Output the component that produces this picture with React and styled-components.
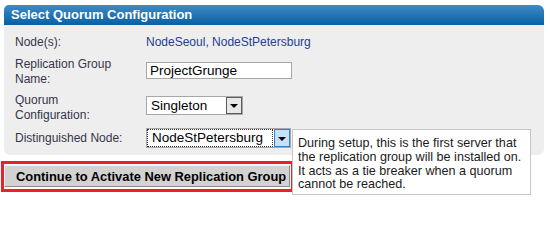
import styled, {createGlobalStyle} from 'styled-components';

const GlobalStyle = createGlobalStyle`
    html, body {
        margin: 0;
        padding: 0;
        background: #ffffff;
    }

    body {
        font-family: "Liberation Sans", Arial, sans-serif;
        font-size: 12px;
    }
`;

const Page = styled.div`
    position: relative;
    width: 550px;
    height: 209px;
    padding-top: 5px;
    box-sizing: border-box;
`;

const Panel = styled.section`
    margin: 0 6px 0 4px;
    background: #eeeeee;
    border-radius: 5px 6px 6px 6px;
    overflow: hidden;
`;

const PanelHeader = styled.h2`
    margin: 0;
    height: 20px;
    padding: 0 7px;
    line-height: 20px;
    font-size: 13px;
    font-weight: bold;
    color: #ffffff;
    background: linear-gradient(#3e8cc7, #0a5ea3);
`;

const FormGrid = styled.div`
    display: grid;
    grid-template-columns: 131px 1fr;
    grid-template-rows: 15px 30px 30px 20px;
    row-gap: 6px;
    padding: 10px 11px 7px;
`;

const Label = styled.div`
    align-self: ${({$align}) => $align || 'start'};
    margin-top: ${({$offset}) => $offset || 0}px;
    line-height: 14.5px;
    color: #353548;
`;

const Value = styled.div`
    line-height: 15px;
    color: #22408f;
`;

const Field = styled.div`
    align-self: ${({$align}) => $align || 'start'};
    margin-top: ${({$offset}) => $offset || 0}px;
`;

const TextInput = styled.div`
    width: 146px;
    height: 17px;
    box-sizing: border-box;
    border: 1px solid #a7a7a7;
    background: #ffffff;
    padding: 0 3px;
    font-size: 13.5px;
    line-height: 15px;
    color: #000000;
`;

const SelectBox = styled.div`
    display: flex;
    align-items: stretch;
    width: ${({$width}) => $width}px;
    height: ${({$height}) => $height}px;
    box-sizing: border-box;
    border: 1px solid #a7a7a7;
    background: #ffffff;
`;

const SelectText = styled.div`
    flex: 1;
    padding: 0 4px;
    font-size: 13.5px;
    line-height: ${({$focused}) => ($focused ? 16 : 17)}px;
    color: #000000;
    border: ${({$focused}) => ($focused ? '1px dotted #333' : '0')};
    margin: ${({$focused}) => ($focused ? '0 1px 0 0' : '0')};
    white-space: nowrap;
    overflow: hidden;
`;

const SelectArrow = styled.div`
    display: flex;
    align-items: center;
    justify-content: center;
    width: 16px;
    box-sizing: border-box;
    border: 1px solid ${({$hot}) => ($hot ? '#3a7fbf' : '#5c5c5c')};
    background: ${({$hot}) => ($hot ? '#c6e0f7' : '#e8e8e8')};

    &::after {
        content: '';
        border-left: 4px solid transparent;
        border-right: 4px solid transparent;
        border-top: 4px solid #000000;
        margin-top: 1px;
    }
`;

const Highlight = styled.div`
    display: inline-block;
    margin: 6px 0 0 1px;
    border: 3px solid #e8212b;
`;

const ActionButton = styled.button`
    display: block;
    width: 286px;
    height: 22px;
    margin: 1px 1px 2px 0;
    padding: 0 0 0 11px;
    text-align: left;
    white-space: nowrap;
    overflow: hidden;
    font-family: "Liberation Sans", Arial, sans-serif;
    font-size: 12.9px;
    font-weight: bold;
    color: #000000;
    background: #d2d2d2;
    border: 1px solid;
    border-color: #f4f4f4 #8c8c8c #8c8c8c #f4f4f4;
    cursor: pointer;
`;

const Tooltip = styled.div`
    position: absolute;
    left: 292px;
    top: 129px;
    width: 239px;
    height: 66px;
    box-sizing: border-box;
    padding: 7px 4px 0 5px;
    background: #ffffff;
    border: 1px solid #c6c6c6;
    font-size: 12.6px;
    line-height: 13.8px;
    color: #1a1a1a;
    white-space: nowrap;
`;

function Select({value, width, height, focused}) {
    return (
        <SelectBox $width={width} $height={height}>
            <SelectText $focused={focused}>{value}</SelectText>
            <SelectArrow $hot={focused}/>
        </SelectBox>
    );
}

export default function App() {
    return (
        <Page>
            <GlobalStyle/>
            <Panel>
                <PanelHeader>Select Quorum Configuration</PanelHeader>
                <FormGrid>
                    <Label>Node(s):</Label>
                    <Value>NodeSeoul, NodeStPetersburg</Value>

                    <Label $offset={1}>Replication Group<br/>Name:</Label>
                    <Field $offset={6}>
                        <TextInput>ProjectGrunge</TextInput>
                    </Field>

                    <Label $offset={1}>Quorum<br/>Configuration:</Label>
                    <Field $offset={4}>
                        <Select value="Singleton" width={97} height={19}/>
                    </Field>

                    <Label $align="center">Distinguished Node:</Label>
                    <Field $align="center">
                        <Select value="NodeStPetersburg" width={145} height={20} focused/>
                    </Field>
                </FormGrid>
            </Panel>
            <Highlight>
                <ActionButton type="button">Continue to Activate New Replication Group</ActionButton>
            </Highlight>
            <Tooltip>
                During setup, this is the first server that<br/>
                the replication group will be installed on.<br/>
                It acts as a tie breaker when a quorum<br/>
                cannot be reached.
            </Tooltip>
        </Page>
    );
}
